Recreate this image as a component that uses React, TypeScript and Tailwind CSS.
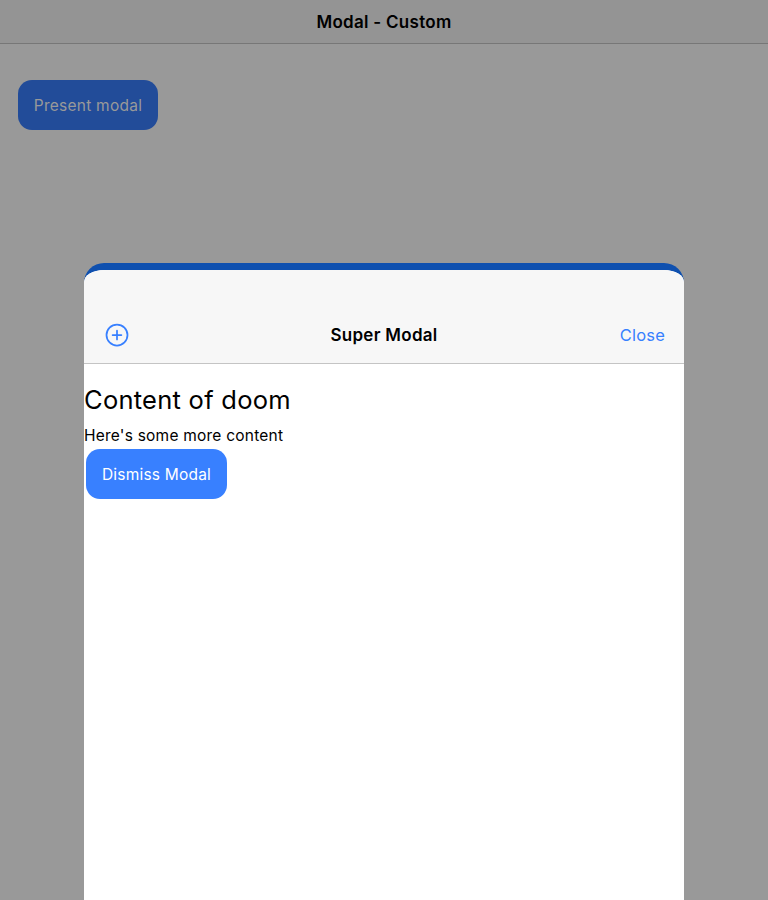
export default function App() {
  return (
    <div className="relative h-[900px] w-[768px] overflow-hidden bg-[#999999] font-['Inter',sans-serif] text-black antialiased">
      <header className="flex h-11 items-center justify-center border-b border-[#777777] bg-[#949494]">
        <h1 className="text-[17px] leading-6 font-semibold tracking-[0.28px]">Modal - Custom</h1>
      </header>
      <main className="px-[18px] pt-9">
        <button className="h-[50px] w-[140px] rounded-[14px] bg-[#224c99] pt-px text-[15.5px] tracking-[0.25px] whitespace-nowrap text-[#999999]">Present modal</button>
      </main>
      <section className="absolute top-[263px] left-[84px] h-[637px] w-[600px] overflow-hidden rounded-t-[20px] bg-[#0f50af] pt-[7px]">
        <div className="h-[630px] overflow-hidden bg-white [border-top-left-radius:20px_12px] [border-top-right-radius:20px_12px]">
          <header className="flex h-[94px] items-center justify-between border-b border-[#c4c4c4] bg-[#f7f7f7] px-[19px] pt-[37px]">
            <button className="flex w-16 text-[#3880ff]">
              <svg className="size-7" viewBox="0 0 512 512" fill="none" stroke="currentColor" strokeWidth="32">
                <path d="M448 256c0-106-86-192-192-192S64 150 64 256s86 192 192 192 192-86 192-192z" strokeMiterlimit="10" />
                <path strokeLinecap="round" strokeLinejoin="round" d="M256 176v160M336 256H176" />
              </svg>
            </button>
            <h2 className="text-[17px] leading-6 font-semibold tracking-[0.28px]">Super Modal</h2>
            <button className="w-16 text-right text-[16.5px] leading-6 tracking-[0.2px] text-[#3880ff]">Close</button>
          </header>
          <div className="pt-[18px]">
            <h3 className="text-[25.5px] leading-9 tracking-[0.26px]">Content of doom</h3>
            <p className="mt-2 text-[15.5px] leading-5 tracking-[0.22px]">Here's some more content</p>
            <button className="mt-[3px] ml-0.5 h-[50px] w-[141px] rounded-[14px] bg-[#3880ff] pt-0.5 text-[15.5px] tracking-[0.2px] whitespace-nowrap text-white">Dismiss Modal</button>
          </div>
        </div>
      </section>
    </div>
  );
}
